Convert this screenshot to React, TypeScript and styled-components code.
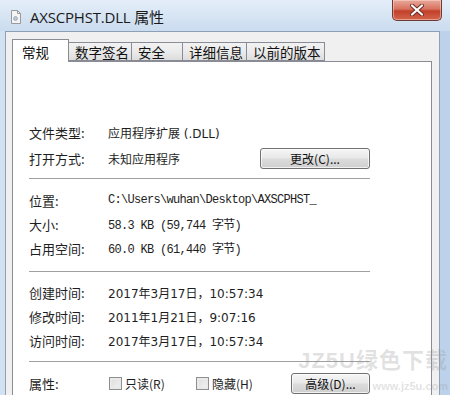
import React from 'react';
import styled, { createGlobalStyle } from 'styled-components';

const GlobalStyle = createGlobalStyle`
  html, body {
    margin: 0;
    padding: 0;
    background: #ffffff;
  }
  * {
    box-sizing: border-box;
  }
`;

type Row = {
  label: string;
  value: string;
  mono?: boolean;
};

const typeRows: Row[] = [
  { label: '文件类型:', value: '应用程序扩展 (.DLL)' },
];

const placeRows: Row[] = [
  { label: '位置:', value: 'C:\\Users\\wuhan\\Desktop\\AXSCPHST_', mono: true },
  { label: '大小:', value: '58.3 KB (59,744 字节)', mono: true },
  { label: '占用空间:', value: '60.0 KB (61,440 字节)', mono: true },
];

const timeRows: Row[] = [
  { label: '创建时间:', value: '2017年3月17日，10:57:34' },
  { label: '修改时间:', value: '2011年1月21日，9:07:16' },
  { label: '访问时间:', value: '2017年3月17日，10:57:34' },
];

const tabs = [
  { name: '常规', w: 57 },
  { name: '数字签名', w: 63 },
  { name: '安全', w: 51 },
  { name: '详细信息', w: 64 },
  { name: '以前的版本', w: 78 },
];

const App: React.FC = () => {
  return (
    <Window>
      <GlobalStyle />
      <TitleBar>
        <FileIcon viewBox="0 0 12 14">
          <path d="M1.5 0.5h6l3 3v10h-9z" fill="#f4f4f4" stroke="#9a9a9a" />
          <path d="M7.5 0.5v3h3" fill="none" stroke="#9a9a9a" />
          <circle cx="5.5" cy="8.5" r="2" fill="#b9c6d4" stroke="#8796a8" strokeWidth="0.6" />
        </FileIcon>
        <Title>AXSCPHST.DLL 属性</Title>
        <CloseButton>
          <svg width="14" height="12" viewBox="0 0 14 12">
            <path
              d="M2 1.5l10 9M12 1.5l-10 9"
              stroke="#6b2a22"
              strokeWidth="4"
              strokeLinecap="round"
            />
            <path
              d="M2 1.5l10 9M12 1.5l-10 9"
              stroke="#ffffff"
              strokeWidth="2.2"
              strokeLinecap="round"
            />
          </svg>
        </CloseButton>
      </TitleBar>
      <Client>
        <TabStrip>
          {tabs.map((t, i) => (
            <Tab key={t.name} $active={i === 0} $w={t.w}>
              {t.name}
            </Tab>
          ))}
        </TabStrip>
        <Panel>
          {typeRows.map((r) => (
            <Line key={r.label} $h={25}>
              <Label>{r.label}</Label>
              <Value>{r.value}</Value>
            </Line>
          ))}
          <Line $h={27}>
            <Label>打开方式:</Label>
            <Value>未知应用程序</Value>
            <Button $w={110}>更改(C)...</Button>
          </Line>
          <Separator $top={6} $bottom={9} />
          {placeRows.map((r) => (
            <Line key={r.label} $h={24}>
              <Label>{r.label}</Label>
              <Value $mono={r.mono}>{r.value}</Value>
            </Line>
          ))}
          <Separator $top={11} $bottom={8} />
          {timeRows.map((r) => (
            <Line key={r.label} $h={24}>
              <Label>{r.label}</Label>
              <Value>{r.value}</Value>
            </Line>
          ))}
          <Separator $top={9} $bottom={9} />
          <Line $h={24}>
            <Label>属性:</Label>
            <Check>
              <Box />
              只读(R)
            </Check>
            <Check>
              <Box />
              隐藏(H)
            </Check>
            <Button $w={79}>高级(D)...</Button>
          </Line>
        </Panel>
      </Client>
      <Watermark>
        <Mark>JZ5U绿色下载</Mark>
        <Site>www.jz5u.com</Site>
      </Watermark>
    </Window>
  );
};

export default App;

const Window = styled.div`
  position: relative;
  width: 450px;
  height: 395px;
  overflow: hidden;
  display: flex;
  flex-direction: column;
  background: linear-gradient(90deg, #d3e2f2 0%, #c6d8ec 60%, #bcd2ea 100%);
  font-family: 'Noto Sans CJK SC', 'Noto Sans', sans-serif;
`;

const TitleBar = styled.div`
  height: 31px;
  flex-shrink: 0;
  display: flex;
  align-items: center;
  padding-left: 10px;
  background: linear-gradient(180deg, #e4eef9 0%, #d6e4f3 55%, #cadcef 100%);
`;

const FileIcon = styled.svg`
  width: 12px;
  height: 14px;
  margin-right: 8px;
  margin-top: 2px;
`;

const Title = styled.div`
  font-family: 'Open Sans', 'Noto Sans CJK SC', sans-serif;
  font-size: 15px;
  color: #1a1a1a;
  letter-spacing: -0.2px;
  margin-top: 1px;
`;

const CloseButton = styled.div`
  margin-left: auto;
  margin-right: 8px;
  align-self: flex-start;
  width: 50px;
  height: 21px;
  display: flex;
  align-items: center;
  justify-content: center;
  border: 1px solid #6d3a36;
  border-top: none;
  border-radius: 0 0 5px 5px;
  background: linear-gradient(180deg, #e9a99b 0%, #d8735f 45%, #c2402a 55%, #d4654c 100%);
  box-shadow: inset 0 0 0 1px rgba(255, 220, 210, 0.5);
`;

const Client = styled.div`
  flex: 1;
  margin: 0 10px 0 5px;
  display: flex;
  flex-direction: column;
  background: #f0f0f0;
  border-left: 1px solid #8e9fb6;
  border-top: 1px solid #8e9fb6;
  border-right: 1px solid #8e9fb6;
  padding: 6px 7px 0 6px;
`;

const TabStrip = styled.div`
  display: flex;
  align-items: flex-end;
  height: 23px;
  position: relative;
  z-index: 1;
`;

const Tab = styled.div<{ $active?: boolean; $w: number }>`
  width: ${(p) => p.$w}px;
  height: ${(p) => (p.$active ? 23 : 19)}px;
  padding: ${(p) => (p.$active ? '2px 0 0 9px' : '0 0 0 6px')};
  margin-bottom: ${(p) => (p.$active ? -1 : 0)}px;
  display: flex;
  align-items: center;
  font-size: 13.5px;
  color: #111;
  border: 1px solid #898c95;
  border-bottom: ${(p) => (p.$active ? 'none' : '1px solid #898c95')};
  border-left: ${(p) => (p.$active ? '1px solid #898c95' : 'none')};
  background: ${(p) =>
    p.$active ? '#ffffff' : 'linear-gradient(180deg, #f2f2f2 0%, #ebebeb 50%, #dddddd 100%)'};
`;

const Panel = styled.div`
  flex: 1;
  background: #ffffff;
  border: 1px solid #898c95;
  border-bottom: none;
  padding: 58px 61px 0 16px;
  display: flex;
  flex-direction: column;
`;

const Line = styled.div<{ $h: number }>`
  height: ${(p) => p.$h}px;
  flex-shrink: 0;
  display: flex;
  align-items: center;
`;

const Label = styled.div`
  width: 79px;
  flex-shrink: 0;
  font-size: 13px;
  color: #1e1e1e;
`;

const Value = styled.div<{ $mono?: boolean }>`
  font-family: ${(p) =>
    p.$mono
      ? "'Liberation Mono', 'Noto Sans CJK SC', monospace"
      : "'DejaVu Sans', 'Noto Sans CJK SC', sans-serif"};
  font-size: 12px;
  letter-spacing: ${(p) => (p.$mono ? '-0.7px' : '0')};
  color: #1e1e1e;
  white-space: nowrap;
`;

const Button = styled.div<{ $w: number }>`
  margin-left: auto;
  width: ${(p) => p.$w}px;
  height: 21px;
  display: flex;
  align-items: center;
  justify-content: center;
  font-size: 12px;
  color: #111;
  border: 1px solid #707070;
  border-radius: 3px;
  background: linear-gradient(180deg, #f6f6f6 0%, #e8e8e8 48%, #dcdcdc 52%, #cfcfcf 100%);
  box-shadow: inset 0 0 0 1px rgba(255, 255, 255, 0.7);
`;

const Separator = styled.div<{ $top: number; $bottom: number }>`
  height: 1px;
  flex-shrink: 0;
  background: #a0a0a0;
  margin: ${(p) => p.$top}px 0 ${(p) => p.$bottom}px;
`;

const Check = styled.div`
  display: flex;
  align-items: center;
  gap: 3px;
  font-size: 12px;
  color: #1e1e1e;
  width: 86px;
  margin-left: 1px;
`;

const Box = styled.span`
  width: 13px;
  height: 13px;
  border: 1px solid #8f8f8f;
  background: linear-gradient(135deg, #dcdcdc 0%, #f4f4f4 100%);
  box-shadow: inset 0 0 0 2px #e9e9e9;
`;

const Watermark = styled.div`
  position: absolute;
  right: 2px;
  bottom: 0;
  display: flex;
  flex-direction: column;
  align-items: flex-end;
  pointer-events: none;
  color: rgba(150, 150, 150, 0.28);
  font-family: 'Liberation Sans', 'Noto Sans CJK SC', sans-serif;
  font-weight: bold;
  line-height: 1;
`;

const Mark = styled.div`
  font-size: 22px;
  letter-spacing: 1px;
  margin-bottom: 23px;
`;

const Site = styled.div`
  position: absolute;
  right: 0;
  bottom: 3px;
  font-size: 11px;
`;
